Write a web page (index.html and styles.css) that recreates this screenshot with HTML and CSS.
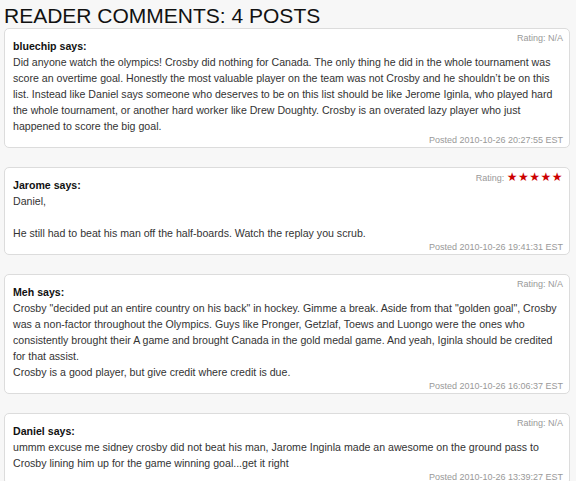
FILE: index.html
```html
<!DOCTYPE html>
<html lang="en">
<head>
    <meta charset="UTF-8">
    <meta name="viewport" content="width=device-width, initial-scale=1.0">
    <title>Reader Comments</title>
    <link rel="stylesheet" href="styles.css">
</head>
<body>

    <!-- Comentarios de lectores -->
    <div class="comments">
        <h2 class="comments-title">READER COMMENTS: 4 POSTS</h2>

        <div class="comment">
            <div class="rating">Rating: N/A</div>
            <div class="author">bluechip says:</div>
            <p class="comment-text">Did anyone watch the olympics! Crosby did nothing for Canada. The only thing he did in the whole tournament was score an overtime goal. Honestly the most valuable player on the team was not Crosby and he shouldn’t be on this list. Instead like Daniel says someone who deserves to be on this list should be like Jerome Iginla, who played hard the whole tournament, or another hard worker like Drew Doughty. Crosby is an overated lazy player who just happened to score the big goal.</p>
            <div class="posted">Posted 2010-10-26 20:27:55 EST</div>
        </div>

        <div class="comment">
            <div class="rating">Rating: <span class="stars">★★★★★</span></div>
            <div class="author">Jarome says:</div>
            <p class="comment-text">Daniel,<br><br>He still had to beat his man off the half-boards. Watch the replay you scrub.</p>
            <div class="posted">Posted 2010-10-26 19:41:31 EST</div>
        </div>

        <div class="comment">
            <div class="rating">Rating: N/A</div>
            <div class="author">Meh says:</div>
            <p class="comment-text">Crosby "decided put an entire country on his back" in hockey. Gimme a break. Aside from that "golden goal", Crosby was a non-factor throughout the Olympics. Guys like Pronger, Getzlaf, Toews and Luongo were the ones who consistently brought their A game and brought Canada in the gold medal game. And yeah, Iginla should be credited for that assist.<br>Crosby is a good player, but give credit where credit is due.</p>
            <div class="posted">Posted 2010-10-26 16:06:37 EST</div>
        </div>

        <div class="comment">
            <div class="rating">Rating: N/A</div>
            <div class="author">Daniel says:</div>
            <p class="comment-text">ummm excuse me sidney crosby did not beat his man, Jarome Inginla made an awesome on the ground pass to Crosby lining him up for the game winning goal...get it right</p>
            <div class="posted">Posted 2010-10-26 13:39:27 EST</div>
        </div>
    </div>

</body>
</html>
```

FILE: styles.css
```css
/* Estilos generales */
* {
    margin: 0;
    padding: 0;
    box-sizing: border-box;
    font-family: 'Liberation Sans', Arial, sans-serif;
}

body {
    background-color: #f7f7f7;
    color: #333;
}

/* Lista de comentarios */
.comments {
    padding: 4px 6px 0 4px;
}

.comments-title {
    font-size: 21px;
    font-weight: normal;
    line-height: 24px;
    color: #111;
}

.comment {
    background-color: #fff;
    border: 1px solid #dcdcdc;
    border-radius: 5px;
    padding: 3px 6px 1px 8px;
    margin-bottom: 19px;
}

.rating {
    height: 12px;
    font-size: 9px;
    line-height: 12px;
    text-align: right;
    color: #999;
    margin-bottom: -6px;
}

.rating .stars {
    font-family: 'DejaVu Sans', sans-serif;
    font-size: 12px;
    line-height: 12px;
    color: #cc0000;
    letter-spacing: 0.5px;
}

.author {
    font-size: 10.6px;
    font-weight: bold;
    line-height: 16px;
    color: #111;
}

.comment-text {
    font-size: 10.6px;
    line-height: 16px;
    color: #333;
}

.posted {
    font-size: 9px;
    line-height: 12px;
    text-align: right;
    color: #999;
}
```
